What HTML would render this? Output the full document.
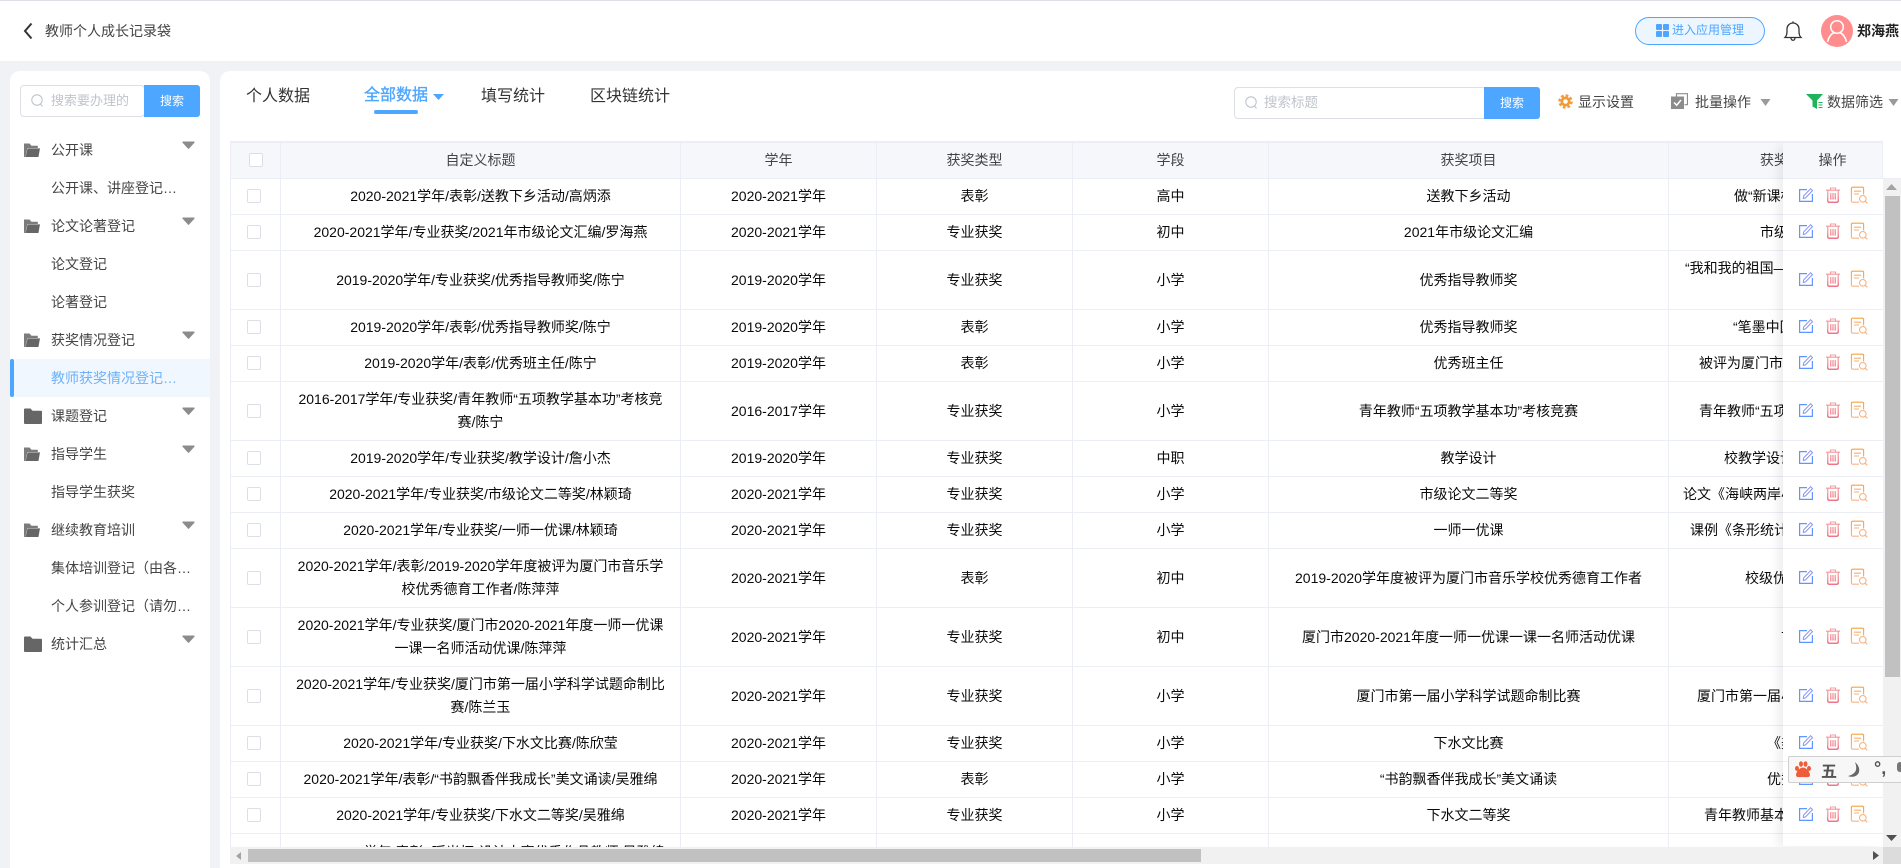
<!DOCTYPE html>
<html lang="zh-CN"><head><meta charset="utf-8"><title>教师个人成长记录袋</title>
<style>
*{box-sizing:border-box;margin:0;padding:0}
html,body{width:1901px;height:868px;overflow:hidden}
body{position:relative;background:#f0f2f5;font:14px/23px "Liberation Sans","Noto Sans CJK SC",sans-serif;color:#0a0a0a}
.a{position:absolute;white-space:nowrap}
svg{display:block}
#hd{left:0;top:0;width:1901px;height:61px;background:#fff;border-top:1px solid #dcdfe6}
#sb{left:10px;top:71px;width:200px;height:797px;background:#fff;border-radius:10px 10px 0 0}
#mn{left:220px;top:71px;width:1681px;height:797px;background:#fff;border-radius:10px 0 0 0}
.mi{left:51px;width:127px;height:38px;line-height:38px;color:#444;overflow:hidden;text-overflow:ellipsis}
.inp{border:1px solid #dcdfe6;border-radius:4px;background:#fff;height:32px}
.btn{background:#4da6ff;color:#fff;font-size:12px;text-align:center;height:32px;line-height:32px;border-radius:0 3px 3px 0}
.ph{color:#c0c4cc;line-height:32px}
.tab{font-size:16px;line-height:24px;top:85px;color:#333}
.tool{top:90px;line-height:24px;color:#444}
#wrap{left:230px;top:141px;width:1653px;height:706px;overflow:hidden;border-top:2px solid #ebeef5;border-left:1px solid #ebeef5}
.r{display:flex;border-bottom:1px solid #ebeef5;width:1700px}
.r>span{display:flex;align-items:center;justify-content:center;text-align:center;border-right:1px solid #ebeef5;flex:none;white-space:nowrap}
.s1{width:50px}.s2{width:400px}.s3{width:196px}.s6{width:400px}
.r>span.s7{width:300px;justify-content:flex-start;border:0}
.h{height:36px;background:#f5f7fa;color:#444}
.o{height:36px}.t{height:59px}
.cb{display:block;width:14px;height:14px;border:1px solid #dcdfe6;border-radius:2px;background:#fff;margin:0 4px 1px 0}
.h .cb{margin:0 0 1px 0}
#fxw{left:1760px;top:143px;width:122px;height:710px;overflow:hidden}
#fx2{position:absolute;left:23px;top:0;width:99px;height:703px;background:#fff;box-shadow:-5px 2px 10px rgba(0,0,0,.07);overflow:hidden}
.f{border-bottom:1px solid #ebeef5;display:flex;align-items:center;padding-bottom:3px}
.f svg{width:99px;height:18px}
.fh{height:36px;background:#f5f7fa;border-bottom:1px solid #ebeef5;text-align:center;line-height:35px;color:#444}
</style></head><body>
<svg width="0" height="0" style="position:absolute"><defs>
<linearGradient id="tg" gradientUnits="userSpaceOnUse" x1="0" y1="1" x2="0" y2="17"><stop offset="0" stop-color="#f4a3a6"/><stop offset=".6" stop-color="#f07f88"/><stop offset="1" stop-color="#e8405a"/></linearGradient>
<linearGradient id="pg" gradientUnits="userSpaceOnUse" x1="0" y1="1" x2="0" y2="17"><stop offset="0" stop-color="#f6a23c"/><stop offset="1" stop-color="#f9b48a"/></linearGradient>
<symbol id="ops" viewBox="0 0 99 18">
<path d="M24 3.600H16.600V15.400H29.400V8" fill="none" stroke="#5f96ff" stroke-width="1.200"/>
<path d="M20.300 12.500l.3-2.500 7-7.300 1.900 1.900-7 7.300z" fill="none" stroke="#8a94f0" stroke-width="1"/>
<path d="M43 4.200h14M47.500 4V2h5v2M44.800 4.500V15a1.200 1.200 0 0 0 1.200 1.200h8a1.200 1.200 0 0 0 1.200-1.200V4.500M47.800 7v6.500M50 7v6.500M52.200 7v6.500" fill="none" stroke="url(#tg)" stroke-width="1.100"/>
<path d="M76 16.200H69.600a1.200 1.200 0 0 1-1.200-1.200V2.400a1.200 1.200 0 0 1 1.200-1.200h9.800a1.200 1.200 0 0 1 1.200 1.200V8.500" fill="none" stroke="url(#pg)" stroke-width="1.100"/>
<path d="M71 5.200h7M71 8h5" fill="none" stroke="#f6b071" stroke-width="1.100"/>
<circle cx="79.800" cy="12.800" r="3.300" fill="#fff" stroke="#f7b27e" stroke-width="1.100"/><path d="M82.200 15.200l2.200 2.200" stroke="#f7b27e" stroke-width="1.100"/>
</symbol>
<symbol id="fo" viewBox="0 0 16 14"><path d="M0 .5h5.500l2 2.200h6.300V5H3.400L1.400 14H0z" fill="#7c7c7c"/><path d="M3.600 5.400H16L14.400 14H1.600z" fill="#666"/></symbol>
<symbol id="fc" viewBox="0 0 18 16"><path d="M0 1.500A1 1 0 0 1 1 .5h5.400l2.200 2.300H17a1 1 0 0 1 1 1V15a1 1 0 0 1-1 1H1a1 1 0 0 1-1-1z" fill="#666"/></symbol>
<symbol id="ar" viewBox="0 0 13 8"><path d="M1 .5h11a.7.7 0 0 1 .5 1.100L7 7.600a.7.7 0 0 1-1 0L.5 1.600A.7.7 0 0 1 1 .5z" fill="#8c8c8c"/></symbol>
<symbol id="sr" viewBox="0 0 13 14"><circle cx="6" cy="6" r="5.200" fill="none" stroke="#c0c4cc" stroke-width="1.100"/><path d="M9.500 10l2 2.400" stroke="#c0c4cc" stroke-width="1.100"/></symbol>
</defs></svg>

<div class="a" id="hd"></div>
<svg class="a" style="left:23px;top:22px" width="10" height="18"><path d="M8.500 1.500L2 9l6.500 7.500" fill="none" stroke="#333" stroke-width="2"/></svg>
<div class="a" style="left:45px;top:20px;color:#444">教师个人成长记录袋</div>
<div class="a" style="left:1635px;top:17px;width:130px;height:28px;border:1px solid #4da6ff;border-radius:14px;background:#edf6ff"></div>
<svg class="a" style="left:1656px;top:24px" width="13" height="13"><g fill="#4da6ff"><rect width="6" height="6" rx="1"/><rect x="7" width="6" height="6" rx="1"/><rect y="7" width="6" height="6" rx="1"/><rect x="7" y="7" width="6" height="6" rx="1"/></g></svg>
<div class="a" style="left:1672px;top:19px;font-size:12px;color:#4da6ff">进入应用管理</div>
<svg class="a" style="left:1783px;top:20px" width="20" height="22"><path d="M2 17.500c1.600-1.600 2-3 2-6V9a6 6 0 0 1 12 0v2.500c0 3 .4 4.400 2 6zM10 3V1.400M8 18c0 3 4 3 4 0" fill="none" stroke="#333" stroke-width="1.300"/></svg>
<svg class="a" style="left:1821px;top:15px" width="32" height="32"><circle cx="16" cy="16" r="16" fill="#ff8d8d"/><circle cx="16" cy="12" r="6.300" fill="none" stroke="#fff" stroke-width="1.500"/><path d="M6.500 27c1-5 4-8.500 7-9.500M25.500 27c-1-5-4-8.500-7-9.500" fill="none" stroke="#fff" stroke-width="1.500"/></svg>
<div class="a" style="left:1857px;top:20px;font-weight:bold;color:#222">郑海燕</div>

<div class="a" id="sb"></div>
<div class="a inp" style="left:20px;top:85px;width:125px"></div>
<svg class="a" style="left:31px;top:94px" width="13" height="14"><use href="#sr"/></svg>
<div class="a ph" style="left:51px;top:85px;font-size:13px">搜索要办理的</div>
<div class="a btn" style="left:144px;top:85px;width:56px">搜索</div>

<div class="a" style="left:10px;top:359px;width:200px;height:38px;background:#f0f7ff"></div>
<div class="a" style="left:10px;top:359px;width:4px;height:38px;background:#4da6ff;border-radius:2px"></div>

<div class="a mi" style="top:131px">公开课</div>
<div class="a mi" style="top:169px">公开课、讲座登记及其他</div>
<div class="a mi" style="top:207px">论文论著登记</div>
<div class="a mi" style="top:245px">论文登记</div>
<div class="a mi" style="top:283px">论著登记</div>
<div class="a mi" style="top:321px">获奖情况登记</div>
<div class="a mi" style="top:359px;color:#6fb2f7">教师获奖情况登记记录</div>
<div class="a mi" style="top:397px">课题登记</div>
<div class="a mi" style="top:435px">指导学生</div>
<div class="a mi" style="top:473px">指导学生获奖</div>
<div class="a mi" style="top:511px">继续教育培训</div>
<div class="a mi" style="top:549px;width:143px">集体培训登记（由各校登记）</div>
<div class="a mi" style="top:587px;width:143px">个人参训登记（请勿重复）</div>
<div class="a mi" style="top:625px">统计汇总</div>

<svg class="a" style="left:24px;top:143px" width="16" height="14"><use href="#fo"/></svg>
<svg class="a" style="left:24px;top:219px" width="16" height="14"><use href="#fo"/></svg>
<svg class="a" style="left:24px;top:333px" width="16" height="14"><use href="#fo"/></svg>
<svg class="a" style="left:24px;top:408px" width="18" height="16"><use href="#fc"/></svg>
<svg class="a" style="left:24px;top:447px" width="16" height="14"><use href="#fo"/></svg>
<svg class="a" style="left:24px;top:523px" width="16" height="14"><use href="#fo"/></svg>
<svg class="a" style="left:24px;top:636px" width="18" height="16"><use href="#fc"/></svg>

<svg class="a" style="left:182px;top:141px" width="13" height="8"><use href="#ar"/></svg>
<svg class="a" style="left:182px;top:217px" width="13" height="8"><use href="#ar"/></svg>
<svg class="a" style="left:182px;top:331px" width="13" height="8"><use href="#ar"/></svg>
<svg class="a" style="left:182px;top:407px" width="13" height="8"><use href="#ar"/></svg>
<svg class="a" style="left:182px;top:445px" width="13" height="8"><use href="#ar"/></svg>
<svg class="a" style="left:182px;top:521px" width="13" height="8"><use href="#ar"/></svg>
<svg class="a" style="left:182px;top:635px" width="13" height="8"><use href="#ar"/></svg>

<div class="a" id="mn"></div>
<div class="a tab" style="left:246px">个人数据</div>
<div class="a tab" style="left:364px;top:84px;color:#4da6ff;-webkit-text-stroke:.35px #4da6ff">全部数据</div>
<svg class="a" style="left:433px;top:94px" width="11" height="6"><path d="M0 0h11L5.500 6z" fill="#4da6ff"/></svg>
<div class="a" style="left:374px;top:110px;width:44px;height:4px;border-radius:2px;background:#4da6ff"></div>
<div class="a tab" style="left:481px">填写统计</div>
<div class="a tab" style="left:590px">区块链统计</div>

<div class="a inp" style="left:1234px;top:87px;width:252px"></div>
<svg class="a" style="left:1245px;top:96px" width="13" height="14"><use href="#sr"/></svg>
<div class="a ph" style="left:1264px;top:87px;font-size:13.500px">搜索标题</div>
<div class="a btn" style="left:1484px;top:87px;width:56px">搜索</div>

<svg class="a" style="left:1558px;top:94px" width="15" height="15"><circle cx="7.500" cy="7.500" r="5" fill="#f39a35"/><circle cx="7.500" cy="7.500" r="6" fill="none" stroke="#f39a35" stroke-width="2.400" stroke-dasharray="2.700 2"/><circle cx="7.500" cy="7.500" r="2.300" fill="#fff"/></svg>
<div class="a tool" style="left:1578px">显示设置</div>
<svg class="a" style="left:1671px;top:93px" width="17" height="16"><path d="M5.500 3.500V.7h11v11h-3" fill="none" stroke="#8c8c8c" stroke-width="1.200"/><rect x="0" y="3.500" width="13" height="12.500" fill="#8c8c8c"/><path d="M3 9.500l2.700 2.700L10 7" fill="none" stroke="#fff" stroke-width="1.500"/></svg>
<div class="a tool" style="left:1695px">批量操作</div>
<svg class="a" style="left:1760px;top:99px" width="11" height="7"><path d="M.5 0h10L5.500 7z" fill="#9a9a9a"/></svg>
<svg class="a" style="left:1806px;top:94px" width="19" height="15"><path d="M0 0h17L11 6.500V15L6.500 12.500V6.500z" fill="#1fb45a"/><path d="M12.500 8.500h4M12.500 11h4M12.500 13.500h4" stroke="#1fb45a" stroke-width="1"/></svg>
<div class="a tool" style="left:1827px">数据筛选</div>
<svg class="a" style="left:1888px;top:99px" width="11" height="7"><path d="M.5 0h10L5.500 7z" fill="#9a9a9a"/></svg>

<div class="a" id="wrap">
<div class="r h"><span class="s1"><i class="cb"></i></span><span class="s2">自定义标题</span><span class="s3">学年</span><span class="s3">获奖类型</span><span class="s3">学段</span><span class="s6">获奖项目</span><span class="s7" style="padding-left:91px">获奖名称</span></div>
<div class="r o"><span class="s1"><i class="cb"></i></span><span class="s2">2020-2021学年/表彰/送教下乡活动/高炳添</span><span class="s3">2020-2021学年</span><span class="s3">表彰</span><span class="s3">高中</span><span class="s6">送教下乡活动</span><span class="s7" style="padding-left:65px">做“新课标”的践行者</span></div>
<div class="r o"><span class="s1"><i class="cb"></i></span><span class="s2">2020-2021学年/专业获奖/2021年市级论文汇编/罗海燕</span><span class="s3">2020-2021学年</span><span class="s3">专业获奖</span><span class="s3">初中</span><span class="s6">2021年市级论文汇编</span><span class="s7" style="padding-left:91px">市级论文</span></div>
<div class="r t"><span class="s1"><i class="cb"></i></span><span class="s2">2019-2020学年/专业获奖/优秀指导教师奖/陈宁</span><span class="s3">2019-2020学年</span><span class="s3">专业获奖</span><span class="s3">小学</span><span class="s6">优秀指导教师奖</span><span class="s7" style="padding-left:16px;align-items:flex-start;padding-top:6px">“我和我的祖国—主题活动</span></div>
<div class="r o"><span class="s1"><i class="cb"></i></span><span class="s2">2019-2020学年/表彰/优秀指导教师奖/陈宁</span><span class="s3">2019-2020学年</span><span class="s3">表彰</span><span class="s3">小学</span><span class="s6">优秀指导教师奖</span><span class="s7" style="padding-left:64px">“笔墨中国”比赛</span></div>
<div class="r o"><span class="s1"><i class="cb"></i></span><span class="s2">2019-2020学年/表彰/优秀班主任/陈宁</span><span class="s3">2019-2020学年</span><span class="s3">表彰</span><span class="s3">小学</span><span class="s6">优秀班主任</span><span class="s7" style="padding-left:30px">被评为厦门市优秀班主任</span></div>
<div class="r t"><span class="s1"><i class="cb"></i></span><span class="s2">2016-2017学年/专业获奖/青年教师“五项教学基本功”考核竞<br>赛/陈宁</span><span class="s3">2016-2017学年</span><span class="s3">专业获奖</span><span class="s3">小学</span><span class="s6">青年教师“五项教学基本功”考核竞赛</span><span class="s7" style="padding-left:30px">青年教师“五项教学基本功”</span></div>
<div class="r o"><span class="s1"><i class="cb"></i></span><span class="s2">2019-2020学年/专业获奖/教学设计/詹小杰</span><span class="s3">2019-2020学年</span><span class="s3">专业获奖</span><span class="s3">中职</span><span class="s6">教学设计</span><span class="s7" style="padding-left:55px">校教学设计比赛</span></div>
<div class="r o"><span class="s1"><i class="cb"></i></span><span class="s2">2020-2021学年/专业获奖/市级论文二等奖/林颖琦</span><span class="s3">2020-2021学年</span><span class="s3">专业获奖</span><span class="s3">小学</span><span class="s6">市级论文二等奖</span><span class="s7" style="padding-left:14px">论文《海峡两岸小学教育》</span></div>
<div class="r o"><span class="s1"><i class="cb"></i></span><span class="s2">2020-2021学年/专业获奖/一师一优课/林颖琦</span><span class="s3">2020-2021学年</span><span class="s3">专业获奖</span><span class="s3">小学</span><span class="s6">一师一优课</span><span class="s7" style="padding-left:21px">课例《条形统计图》</span></div>
<div class="r t"><span class="s1"><i class="cb"></i></span><span class="s2">2020-2021学年/表彰/2019-2020学年度被评为厦门市音乐学<br>校优秀德育工作者/陈萍萍</span><span class="s3">2020-2021学年</span><span class="s3">表彰</span><span class="s3">初中</span><span class="s6">2019-2020学年度被评为厦门市音乐学校优秀德育工作者</span><span class="s7" style="padding-left:76px">校级优秀</span></div>
<div class="r t"><span class="s1"><i class="cb"></i></span><span class="s2">2020-2021学年/专业获奖/厦门市2020-2021年度一师一优课<br>一课一名师活动优课/陈萍萍</span><span class="s3">2020-2021学年</span><span class="s3">专业获奖</span><span class="s3">初中</span><span class="s6">厦门市2020-2021年度一师一优课一课一名师活动优课</span><span class="s7" style="padding-left:112px">市级</span></div>
<div class="r t"><span class="s1"><i class="cb"></i></span><span class="s2">2020-2021学年/专业获奖/厦门市第一届小学科学试题命制比<br>赛/陈兰玉</span><span class="s3">2020-2021学年</span><span class="s3">专业获奖</span><span class="s3">小学</span><span class="s6">厦门市第一届小学科学试题命制比赛</span><span class="s7" style="padding-left:28px">厦门市第一届小学科学</span></div>
<div class="r o"><span class="s1"><i class="cb"></i></span><span class="s2">2020-2021学年/专业获奖/下水文比赛/陈欣莹</span><span class="s3">2020-2021学年</span><span class="s3">专业获奖</span><span class="s3">小学</span><span class="s6">下水文比赛</span><span class="s7" style="padding-left:98px">《美</span></div>
<div class="r o"><span class="s1"><i class="cb"></i></span><span class="s2">2020-2021学年/表彰/“书韵飘香伴我成长”美文诵读/吴雅绵</span><span class="s3">2020-2021学年</span><span class="s3">表彰</span><span class="s3">小学</span><span class="s6">“书韵飘香伴我成长”美文诵读</span><span class="s7" style="padding-left:98px">优秀</span></div>
<div class="r o"><span class="s1"><i class="cb"></i></span><span class="s2">2020-2021学年/专业获奖/下水文二等奖/吴雅绵</span><span class="s3">2020-2021学年</span><span class="s3">专业获奖</span><span class="s3">小学</span><span class="s6">下水文二等奖</span><span class="s7" style="padding-left:35px">青年教师基本功</span></div>
<div class="r t"><span class="s1"><i class="cb"></i></span><span class="s2" style="align-items:flex-start;padding-top:7px">2020-2021学年/表彰/“瑶光杯”设计大赛优秀作品教师/吴雅绵</span><span class="s3"></span><span class="s3"></span><span class="s3"></span><span class="s6"></span><span class="s7"></span></div>
</div>

<div class="a" style="left:1882px;top:143px;width:19px;height:36px;background:#fff;border-left:1px solid #ebeef5;border-bottom:1px solid #ebeef5"></div>

<!-- fixed action column -->
<div class="a" id="fxw"><div id="fx2">
<div class="fh">操作</div>
<div class="f" style="height:36px"><svg><use href="#ops"/></svg></div>
<div class="f" style="height:36px"><svg><use href="#ops"/></svg></div>
<div class="f" style="height:59px"><svg><use href="#ops"/></svg></div>
<div class="f" style="height:36px"><svg><use href="#ops"/></svg></div>
<div class="f" style="height:36px"><svg><use href="#ops"/></svg></div>
<div class="f" style="height:59px"><svg><use href="#ops"/></svg></div>
<div class="f" style="height:36px"><svg><use href="#ops"/></svg></div>
<div class="f" style="height:36px"><svg><use href="#ops"/></svg></div>
<div class="f" style="height:36px"><svg><use href="#ops"/></svg></div>
<div class="f" style="height:59px"><svg><use href="#ops"/></svg></div>
<div class="f" style="height:59px"><svg><use href="#ops"/></svg></div>
<div class="f" style="height:59px"><svg><use href="#ops"/></svg></div>
<div class="f" style="height:36px"><svg><use href="#ops"/></svg></div>
<div class="f" style="height:36px"><svg><use href="#ops"/></svg></div>
<div class="f" style="height:36px"><svg><use href="#ops"/></svg></div>
</div></div>

<!-- vertical scrollbar -->
<div class="a" style="left:1883px;top:179px;width:18px;height:668px;background:#f1f1f1"></div>
<div class="a" style="left:1885px;top:196px;width:15px;height:481px;background:#c1c1c1"></div>
<svg class="a" style="left:1886px;top:184px" width="11" height="6"><path d="M5.500 0L11 6H0z" fill="#a3a3a3"/></svg>
<svg class="a" style="left:1886px;top:835px" width="11" height="6"><path d="M0 0h11L5.500 6z" fill="#505050"/></svg>

<!-- horizontal scrollbar -->
<div class="a" style="left:230px;top:847px;width:1653px;height:17px;background:#f1f1f1"></div>
<div class="a" style="left:248px;top:849px;width:953px;height:13px;background:#c1c1c1"></div>
<svg class="a" style="left:236px;top:852px" width="5" height="8"><path d="M5 0v8L0 4z" fill="#a3a3a3"/></svg>
<svg class="a" style="left:1873px;top:851px" width="6" height="9"><path d="M0 0v9l6-4.500z" fill="#505050"/></svg>
<div class="a" style="left:1883px;top:847px;width:18px;height:17px;background:#dcdcdc"></div>

<!-- IME toolbar -->
<div class="a" style="left:1788px;top:756px;width:114px;height:27px;background:#f7f7f7;border:1px solid #cfcfcf;border-radius:2px;overflow:hidden">
<svg class="a" style="left:6px;top:4px" width="16" height="17"><g fill="#ee5c3a"><ellipse cx="2" cy="7.500" rx="2" ry="2.500"/><ellipse cx="6" cy="3" rx="2" ry="2.800"/><ellipse cx="10.500" cy="3" rx="2" ry="2.800"/><ellipse cx="14" cy="7.500" rx="2" ry="2.500"/><path d="M8 6.500c3.500 0 7 4.500 7 7.500 0 3-4.500 2-7 2s-7 1-7-2c0-3 3.500-7.500 7-7.500z"/></g></svg>
<div class="a" style="left:32px;top:1px;font:bold 16px/24px 'Noto Sans CJK SC',sans-serif;color:#555">五</div>
<svg class="a" style="left:58px;top:5px" width="13" height="16"><path d="M8 0c3 3 5 6 4 10-1 4-6 6-11 4 4-1 7-3 8-6 .6-3 0-5-1-8z" fill="#666"/></svg>
<div class="a" style="left:85px;top:-1px;font:bold 18px/24px 'Liberation Sans',sans-serif;color:#555">°,</div>
<div class="a" style="left:108px;top:5px;width:6px;height:10px;background:#777;border-radius:3px"></div>
</div>
</body></html>
